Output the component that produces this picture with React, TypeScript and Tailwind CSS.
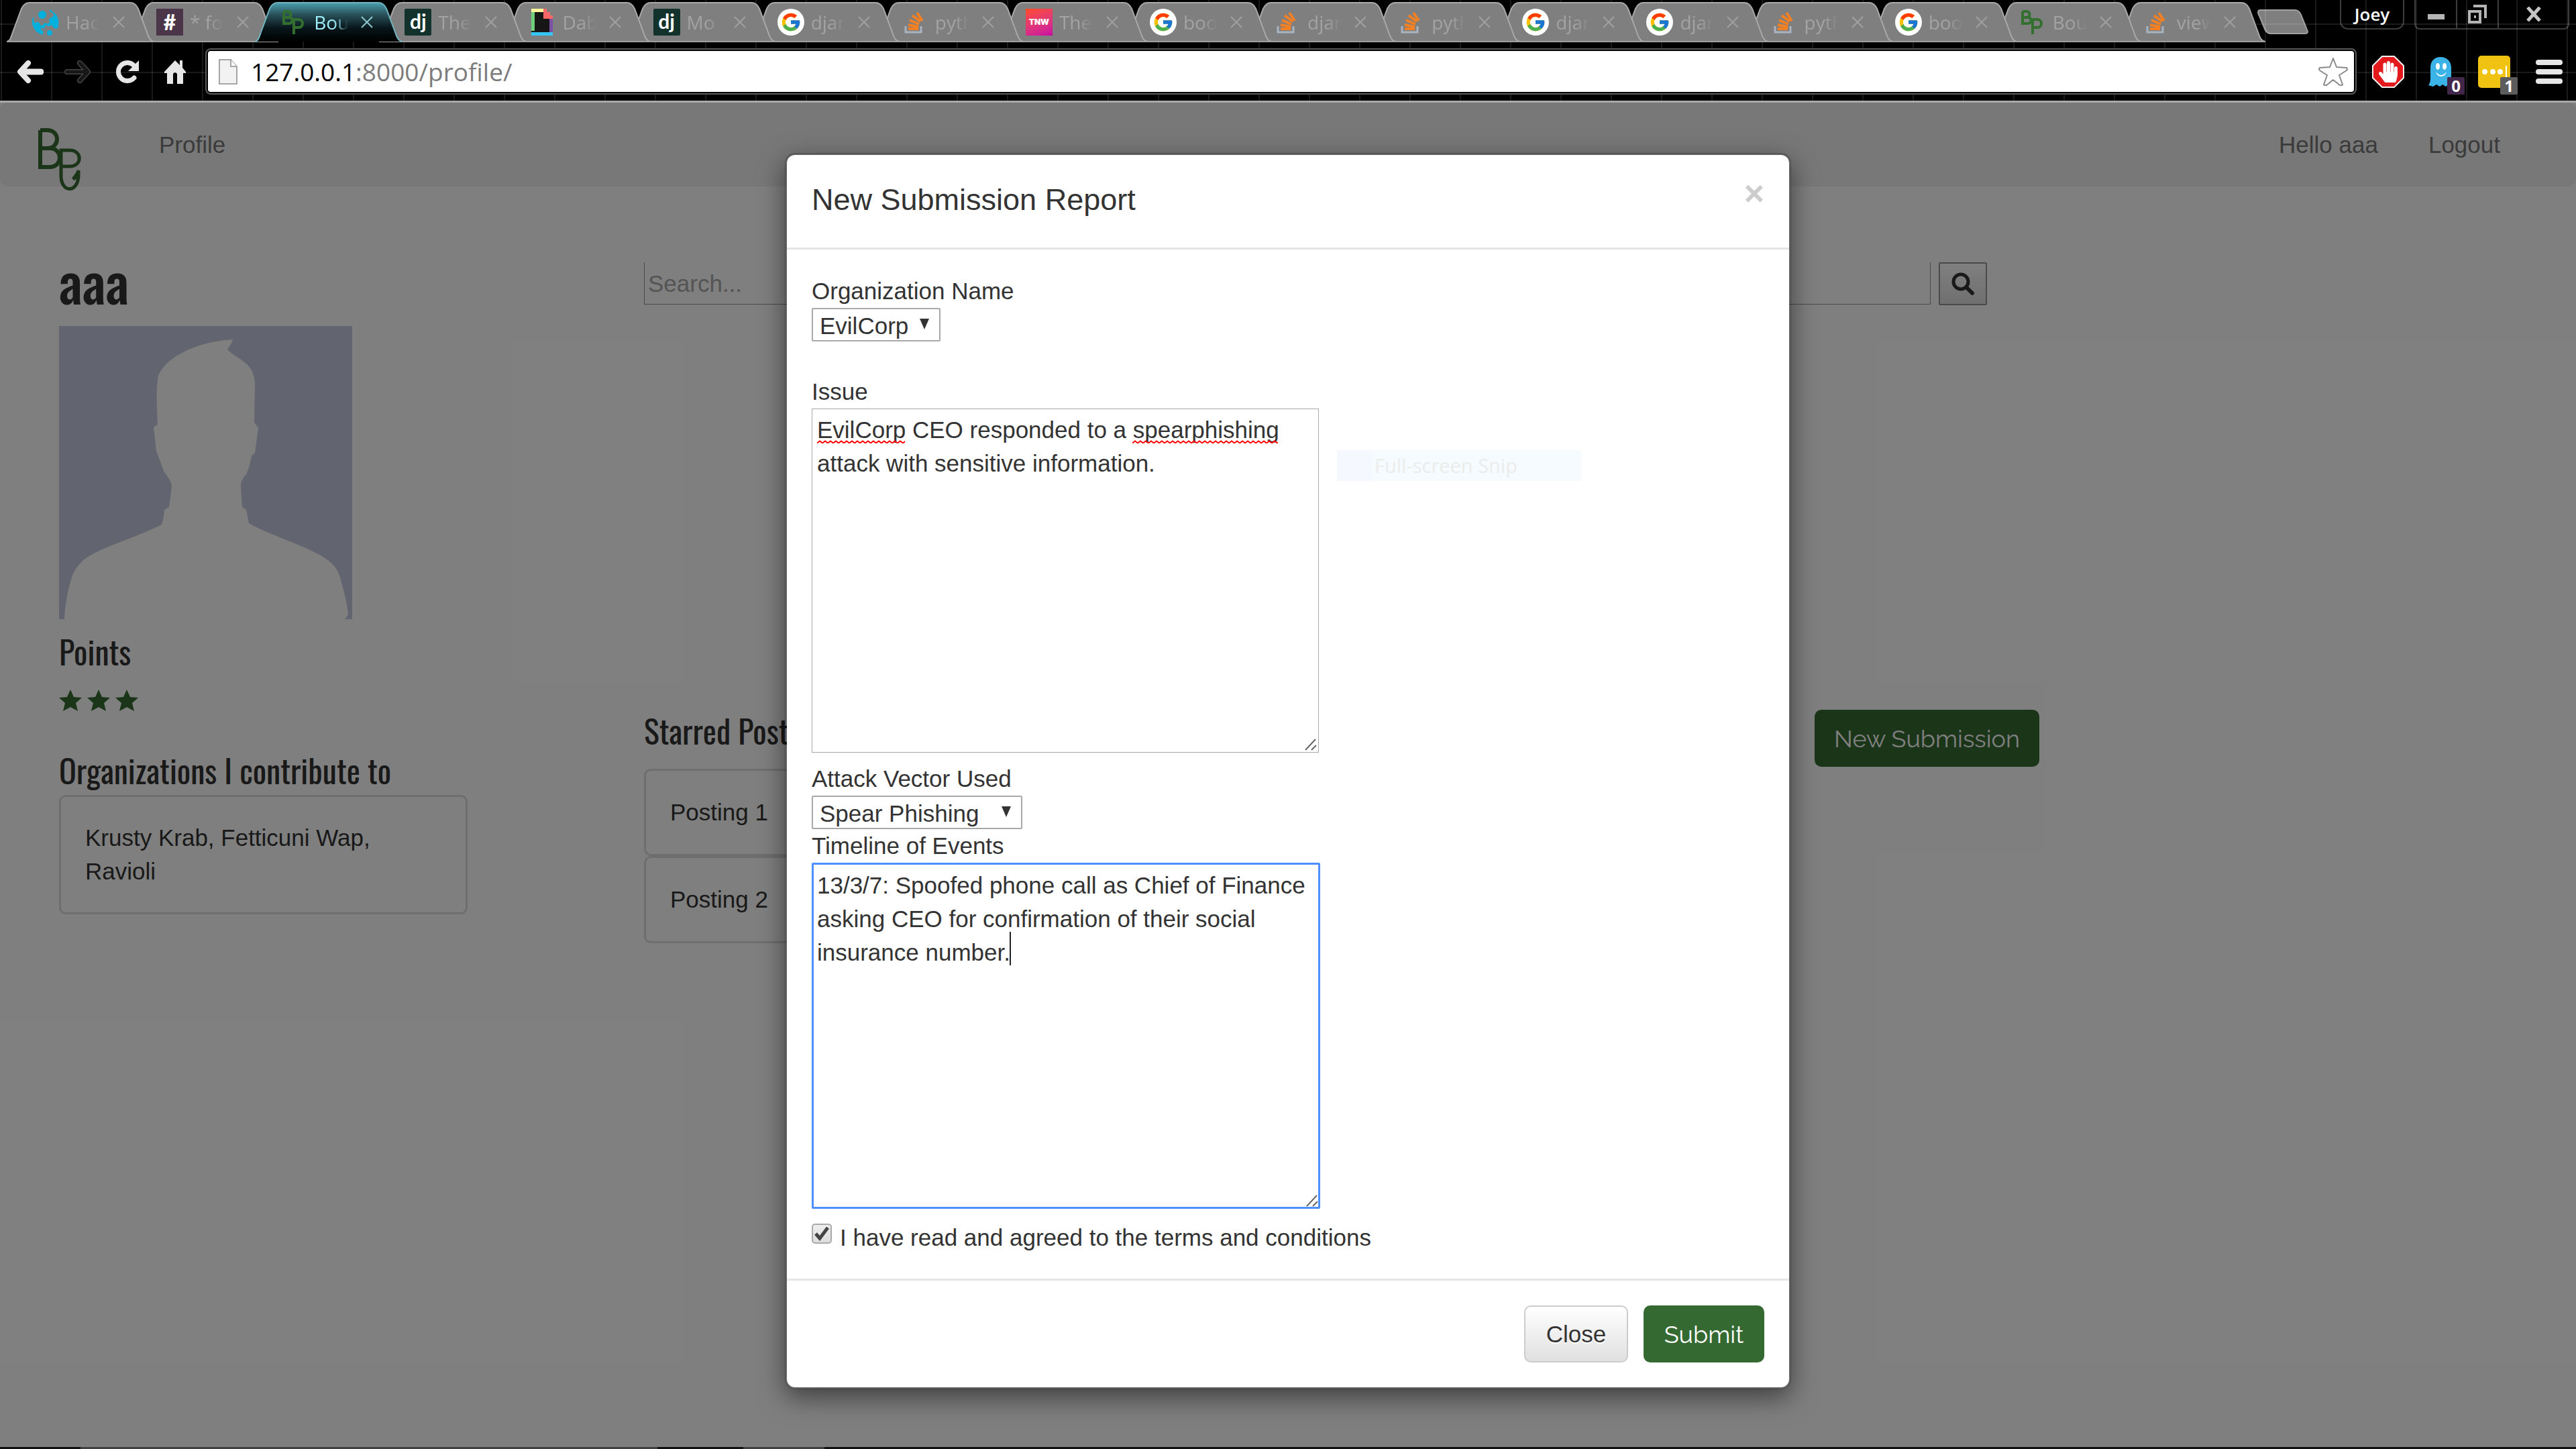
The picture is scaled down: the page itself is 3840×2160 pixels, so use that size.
import type { ReactNode } from "react";
import { FaHandPaper } from "react-icons/fa";
import { FcGoogle } from "react-icons/fc";

function GlobeIcon() {
  return (
    <svg viewBox="0 0 40 40" className="size-10" fill="#00b0dc">
      <circle cx="15" cy="9" r="6" />
      <path d="M27 1c3 4 8 5 10 10 3 6 3 12 1 18-4 2-8-1-8-5-3 1-4 3-7 2-1-2-4-2-4 1 0 3-4 3-6 1 1 3-1 4 3 5 2 2-1 4 0 6C7 37 1 30 0 21c0-4 0-7 2-9 1 4-1 8 3 9 4-3 7 0 7 4 3 0 5 0 5-3 3-2 6 2 9-1 0-3-2-3 0-6 2-3 6-2 6-6 0-3-4-3-6-6z" />
      <circle cx="26" cy="36" r="4" />
    </svg>
  );
}

function SlackIcon() {
  return (
    <span className="flex size-10 items-center justify-center bg-[#4b3549] font-['Lato'] text-[32px] leading-none font-black text-white">
      #
    </span>
  );
}

function DjangoIcon() {
  return (
    <span className="flex size-10 items-center justify-center rounded-xs bg-[#13322b] pb-1 font-['Lato'] text-[30px] leading-none font-bold text-white">
      dj
    </span>
  );
}

function SketchIcon() {
  return (
    <svg viewBox="0 0 40 40" className="size-10">
      <path d="M4 0h18v10h14v30H4z" fill="#161616" />
      <path d="M4 0h18v5H9v28H4z" fill="#6fcf7a" />
      <path d="M4 0h18v5H4z" fill="#fff59a" />
      <path d="M22 0h5v5h5v5h4v5H22z" fill="#fb6767" />
      <path d="M31 15h5v20h-5z" fill="#7c52a5" />
      <path d="M4 35h32v5H4z" fill="#35c6f4" />
    </svg>
  );
}

function OverflowIcon() {
  return (
    <svg viewBox="0 0 40 40" className="size-10" fill="none">
      <path d="M6 26v9h23v-9" stroke="#a9b4c2" strokeWidth="3" />
      <path d="M10 30h15M10 24l15 3M12 17l14 6M16 10l12 9M23 6l8 12" stroke="#f48024" strokeWidth="4" />
    </svg>
  );
}

function TnwIcon() {
  return (
    <span className="flex size-10 items-center justify-center bg-linear-160 from-[#ff4a1c] to-[#c900a4] font-['Inter'] text-[12px] font-black text-white">
      TNW
    </span>
  );
}

function GoogleIcon() {
  return (
    <span className="flex size-10 items-center justify-center rounded-full bg-white">
      <FcGoogle className="size-8" />
    </span>
  );
}

function BpIcon() {
  return (
    <svg viewBox="0 0 40 40" className="size-10" fill="none" stroke="#33702f" strokeWidth="4">
      <path d="M5 4v18h8c6 0 6-9 0-9H5M5 13h6c6 0 6-9 0-9H5" />
      <path d="M20 38V16h7c8 0 8 12 0 12h-7" />
    </svg>
  );
}

const tabs: { title: string; icon: ReactNode; active?: boolean }[] = [
  { title: "Hac", icon: <GlobeIcon /> },
  { title: "* fo", icon: <SlackIcon /> },
  { title: "Bou", icon: <BpIcon />, active: true },
  { title: "The", icon: <DjangoIcon /> },
  { title: "Dab", icon: <SketchIcon /> },
  { title: "Mo", icon: <DjangoIcon /> },
  { title: "djan", icon: <GoogleIcon /> },
  { title: "pyth", icon: <OverflowIcon /> },
  { title: "The", icon: <TnwIcon /> },
  { title: "boo", icon: <GoogleIcon /> },
  { title: "djan", icon: <OverflowIcon /> },
  { title: "pyth", icon: <OverflowIcon /> },
  { title: "djan", icon: <GoogleIcon /> },
  { title: "djan", icon: <GoogleIcon /> },
  { title: "pyth", icon: <OverflowIcon /> },
  { title: "boo", icon: <GoogleIcon /> },
  { title: "Bou", icon: <BpIcon /> },
  { title: "view", icon: <OverflowIcon /> },
];

function TabShape({ active }: { active?: boolean }) {
  return (
    <svg viewBox="0 0 220 63" className="absolute top-0 left-0 h-[63px] w-[220px]" fill="none">
      <defs>
        <linearGradient id="activeTab" x1="0" y1="0" x2="0" y2="1">
          <stop offset="0" stopColor="#4aa0b0" />
          <stop offset="0.3" stopColor="#2a525b" />
          <stop offset="0.65" stopColor="#08161a" />
          <stop offset="1" stopColor="#000" />
        </linearGradient>
      </defs>
      <path
        d="M0 62C5 61 6 57 9 48L22 13Q26 4 34 4H184Q192 4 196 13L209 48C212 57 214 61 220 62"
        fill={active ? "url(#activeTab)" : "#7f7f7f"}
        stroke={active ? "#6fb4bf" : "#a9a9a9"}
        strokeWidth="2"
      />
      {!active && <path d="M0 62H220" stroke="#a0a0a0" strokeWidth="2" />}
    </svg>
  );
}

function TabStrip() {
  return (
    <div className="flex h-[63px]">
      <div className="flex flex-1 pl-[10px]">
        {tabs.map((tab, i) => (
          <div
            key={i}
            className="relative h-full flex-1"
            style={{ zIndex: tab.active ? 20 : tabs.length - i }}
          >
            <TabShape active={tab.active} />
            <div className="relative flex h-full w-[180px] items-center pt-[3px] pl-[38px]">
              <span className="shrink-0">{tab.icon}</span>
              <span
                className={
                  tab.active
                    ? "ml-[10px] w-[60px] shrink-0 mask-r-from-50% mask-r-to-85% text-[28px] whitespace-nowrap text-[#9eeefa]"
                    : "ml-[10px] w-[60px] shrink-0 mask-r-from-50% mask-r-to-85% text-[28px] whitespace-nowrap text-[#a3a3a3]"
                }
              >
                {tab.title}
              </span>
              <button aria-label="Close tab" className="ml-[10px] shrink-0">
                <svg
                  viewBox="0 0 18 18"
                  className={tab.active ? "size-[18px] text-[#8fc7d0]" : "size-[18px] text-[#a0a0a0]"}
                  stroke="currentColor"
                  strokeWidth="2"
                >
                  <path d="M1 1l16 16M17 1L1 17" />
                </svg>
              </button>
            </div>
          </div>
        ))}
      </div>
      <div className="flex w-[498px] items-start pl-[23px]">
        <button aria-label="New tab" className="mt-[14px]">
          <svg viewBox="0 0 76 37" className="h-[37px] w-[76px]">
            <path d="M4 1H56Q62 1 65 8L75 33Q75 36 71 36H20Q14 36 11 29L1 5Q1 1 4 1z" fill="#7f7f7f" stroke="#a0a0a0" strokeWidth="2" />
          </svg>
        </button>
        <button className="ml-[47px] h-11 w-24 rounded-b-xl border-2 border-t-0 border-[#3c3c3c] text-[26px] leading-none font-semibold text-white">
          Joey
        </button>
        <div className="ml-[15px] flex h-11 rounded-b-lg border-2 border-t-0 border-[#3c3c3c]">
          <button aria-label="Minimize" className="flex w-[62px] items-center justify-center border-r-2 border-[#3c3c3c]">
            <span className="mt-2 h-2 w-[25px] bg-[#b5b5b5]" />
          </button>
          <button aria-label="Restore" className="flex w-[62px] items-center justify-center border-r-2 border-[#3c3c3c]">
            <svg viewBox="0 0 28 28" className="size-7" fill="none" stroke="#b5b5b5" strokeWidth="4">
              <path d="M8 2h18v18" />
              <path d="M2 10h16v16H2z" />
              <path d="M9 18h3" />
            </svg>
          </button>
          <button aria-label="Close window" className="flex w-[103px] items-center justify-center">
            <svg viewBox="0 0 24 22" className="h-[22px] w-6" stroke="#c4c4c4" strokeWidth="5">
              <path d="M3 1l18 20M21 1L3 21" />
            </svg>
          </button>
        </div>
      </div>
    </div>
  );
}

function Toolbar() {
  return (
    <div className="flex h-[87px] items-center pr-5 pl-[25px]">
      <button aria-label="Back">
        <svg viewBox="0 0 40 36" className="h-9 w-10" fill="none" stroke="#e6e6e6" strokeWidth="8" strokeLinecap="round" strokeLinejoin="round">
          <path d="M17 5L5 18l12 13" />
          <path d="M8 18h28" strokeWidth="9" />
        </svg>
      </button>
      <button aria-label="Forward" className="ml-[31px]">
        <svg viewBox="0 0 40 36" className="h-9 w-10" fill="none" strokeLinecap="round" strokeLinejoin="round">
          <path d="M23 5l12 13-12 13M4 18h28" stroke="#454545" strokeWidth="8" />
          <path d="M23 5l12 13-12 13M4 18h28" stroke="#171717" strokeWidth="5" />
        </svg>
      </button>
      <button aria-label="Reload" className="ml-9">
        <svg viewBox="0 0 36 36" className="size-9" fill="none">
          <path d="M28 27A13.500 13.500 0 1 1 27 8" stroke="#e6e6e6" strokeWidth="7" strokeLinecap="round" />
          <path d="M35 1v16H19z" fill="#e6e6e6" />
        </svg>
      </button>
      <button aria-label="Home" className="ml-9">
        <svg viewBox="0 0 34 36" className="h-9 w-[34px]" fill="#e6e6e6">
          <path d="M17 1l7 7V1h4v11l5 6v2h-4v16H20V21q-3-4-6 0v15H5V20H1v-2z" />
        </svg>
      </button>
      <form className="ml-7 flex h-[69px] flex-1 items-center rounded-lg border-2 border-[#5a5a5a] bg-black p-[2px]">
        <div className="flex h-full flex-1 items-center rounded-sm bg-white pr-[9px] pl-4">
          <svg viewBox="0 0 28 38" className="h-[38px] w-7" fill="#f2f2f2" stroke="#8c8c8c" strokeWidth="1.500">
            <path d="M1 1h17l9 10v26H1z" />
            <path d="M18 1v10h9" fill="#fff" />
          </svg>
          <div className="ml-5 flex-1 text-[37px] leading-none text-[#7c7c7c]">
            <span className="text-black">127.0.0.1</span>:8000/profile/
          </div>
          <button type="button" aria-label="Bookmark this page">
            <svg viewBox="0 0 44 42" className="h-[42px] w-11" fill="#fff" stroke="#8a8a8a" strokeWidth="2" strokeLinejoin="round">
              <path d="M22 1l5 13 15 1q2 2 0 4L31 26l5 14q-1 2-4 1L22 33l-10 8q-3 1-4-1l5-14L2 19q-2-2 0-4l15-1z" />
            </svg>
          </button>
        </div>
      </form>
      <div className="ml-[23px] flex items-center">
        <button aria-label="Ad blocker" className="relative flex size-12 items-center justify-center">
          <svg viewBox="0 0 48 48" className="absolute inset-0 size-12">
            <path d="M15 1h18l14 14v18L33 47H15L1 33V15z" fill="#e3191c" stroke="#f3f3f3" strokeWidth="2" />
          </svg>
          <FaHandPaper className="relative size-8 text-white" />
        </button>
        <button aria-label="Tracker blocker, 0 found" className="relative ml-9 h-12 w-[56px]">
          <svg viewBox="0 0 36 46" className="h-[46px] w-9">
            <path d="M3 17C3 7 9 1 18 1s16 6 16 16v22l2 5-6-2-4 3-5-3-4 3-5-3-5 3-7-2q3-4 3-10z" fill="#3cb3e6" />
            <ellipse cx="14" cy="15" rx="3" ry="5" fill="#fff" />
            <ellipse cx="24" cy="15" rx="3" ry="5" fill="#fff" />
            <path d="M11 23q8 10 16 0-2 7-8 7t-8-7z" fill="#fff" />
          </svg>
          <span className="absolute top-8 left-7 flex h-[26px] w-[26px] items-center justify-center rounded-xs bg-[#43274a] text-[24px] leading-none font-bold text-white">
            0
          </span>
        </button>
        <button aria-label="Password manager, 1 match" className="relative ml-[18px] h-12 w-[62px]">
          <svg viewBox="0 0 48 48" className="size-12">
            <rect width="48" height="48" rx="5" fill="#f0c211" />
            <g fill="#fff">
              <circle cx="10" cy="24" r="4" />
              <circle cx="22" cy="24" r="4" />
              <circle cx="33" cy="24" r="4" />
              <path d="M41 15h2v18h-2z" />
            </g>
          </svg>
          <span className="absolute top-8 left-[33px] flex h-[26px] w-[26px] items-center justify-center rounded-xs bg-[#5c5c5c] text-[24px] leading-none font-bold text-white">
            1
          </span>
        </button>
        <button aria-label="Menu" className="ml-6 flex w-10 flex-col gap-[6px]">
          <span className="h-2 rounded-full bg-[#e6e6e6]" />
          <span className="h-2 rounded-full bg-[#e6e6e6]" />
          <span className="h-2 rounded-full bg-[#e6e6e6]" />
        </button>
      </div>
    </div>
  );
}

function BrowserChrome() {
  return (
    <header className="relative border-b-[3px] border-[#a8a8a8] bg-black font-['Open_Sans',sans-serif]">
      <TabStrip />
      <div className="absolute inset-0 bg-[linear-gradient(90deg,rgba(255,255,255,0.1)_2px,transparent_2px),linear-gradient(rgba(255,255,255,0.1)_2px,transparent_2px)] bg-[length:75px_72px] bg-[position:1px_35px]" />
      <div className="relative">
        <Toolbar />
      </div>
    </header>
  );
}

function Navbar() {
  return (
    <nav className="flex h-[125px] items-center rounded-[10px] bg-[#f0f0f0] pr-[113px] pl-[57px] text-[#777]">
      <a href="/" aria-label="Home" className="mt-[45px]">
        <svg viewBox="0 0 66 94" className="h-[94px] w-[66px]" fill="none" stroke="#346a31" strokeWidth="6">
          <path d="M3 3v55h14c20 0 20-28 0-28H3M3 30h10c20 0 20-27 0-27H3" />
          <path d="M34 58V33h13c19 0 19 24 0 24H34v14c0 26 25 26 26 0V63c-1 5-4 8-8 13l8-5" strokeWidth="5" />
        </svg>
      </a>
      <a href="/profile/" className="ml-[114px]">
        Profile
      </a>
      <a href="/profile/" className="ml-auto">
        Hello aaa
      </a>
      <a href="/logout/" className="ml-[75px]">
        Logout
      </a>
    </nav>
  );
}

function Star() {
  return (
    <svg viewBox="0 0 34 32" className="h-8 w-[34px]" fill="#346a31">
      <path d="M17 0l5 11 12 1-9 8 3 12-11-6-11 6 3-12-9-8 12-1z" />
    </svg>
  );
}

function Sidebar() {
  return (
    <aside className="w-[609px]">
      <h1 className="font-['Oswald','Roboto',sans-serif] text-[80px] leading-[54px] font-medium">aaa</h1>
      <svg viewBox="0 0 437 437" className="mt-[41px] size-[437px]" role="img" aria-label="Profile picture">
        <rect width="437" height="437" fill="#c5cbdf" />
        <path
          d="M8 437C9 414 14 388 21 369Q30 350 50 340C80 324 120 313 153 296Q156 288 157 274L164 270L168 240Q168 231 157 218Q150 200 145 186L141 151L147 147C146 120 144 96 148 74C154 60 168 48 180 42C200 30 228 22 259 20Q258 25 251 35C258 43 270 48 279 56C288 64 291 74 292 84L291 144L297 152L292 189L287 193Q285 208 279 221Q270 230 271 240L273 270L279 274L283 294C310 310 355 323 386 340Q410 352 417 369Q427 400 431 428Q430 434 426 437z"
          fill="#fff"
        />
      </svg>
      <Heading className="mt-[10px]">Points</Heading>
      <div className="mt-5 flex gap-2">
        <Star />
        <Star />
        <Star />
      </div>
      <Heading className="mt-[50px]">Organizations I contribute to</Heading>
      <div className="rounded-[10px] border-3 border-[#ddd] px-9 py-9">
        <p className="w-[480px]">Krusty Krab, Fetticuni Wap, Ravioli</p>
      </div>
    </aside>
  );
}

function Heading({ className = "", children }: { className?: string; children: ReactNode }) {
  return (
    <h2 className={`font-['Oswald','Roboto',sans-serif] text-[48px] leading-[75px] font-normal ${className}`}>
      {children}
    </h2>
  );
}

function Main() {
  return (
    <main className="flex-1">
      <form className="flex items-start gap-3">
        <input
          type="search"
          aria-label="Search"
          placeholder="Search..."
          className="h-[63px] w-[1918px] border border-t-0 border-[#949494] pt-[2px] pl-[5px] placeholder:text-[#a9a9a9]"
        />
        <button
          type="button"
          aria-label="Search"
          className="flex h-16 w-[72px] items-center justify-center rounded-xs border-2 border-[#949494] bg-linear-to-b from-white to-[#e0e0e0]"
        >
          <svg viewBox="0 0 34 34" className="size-[34px]" fill="none" stroke="#333">
            <circle cx="14" cy="14" r="11" strokeWidth="5" />
            <path d="M22 22l9 9" strokeWidth="6" strokeLinecap="round" />
          </svg>
        </button>
      </form>
      <div className="mt-[596px] flex items-start">
        <section className="w-[1745px]">
          <Heading>Starred Postings</Heading>
          <div className="mt-5 mr-[45px]">
            <div className="rounded-[10px] border-3 border-[#ddd] px-9 py-[37px]">Posting 1</div>
            <div className="rounded-[10px] border-3 border-[#ddd] px-9 py-[37px]">Posting 2</div>
          </div>
        </section>
        <button className="mt-[7px] h-[85px] w-[335px] rounded-[10px] bg-[#346a31] font-['Raleway','Lato',sans-serif] text-[36px] text-white">
          New Submission
        </button>
      </div>
    </main>
  );
}

function Picker({ id, options, width }: { id: string; options: string[]; width: string }) {
  return (
    <div className={`relative h-[50px] ${width}`}>
      <select id={id} className="h-full w-full appearance-none rounded-xs border-2 border-[#a9a9a9] bg-white pb-[2px] pl-[10px]">
        {options.map((option) => (
          <option key={option}>{option}</option>
        ))}
      </select>
      <svg viewBox="0 0 14 16" className="pointer-events-none absolute top-4 right-[17px] h-4 w-[14px]" fill="#333">
        <path d="M0 0h14L7 16z" />
      </svg>
    </div>
  );
}

function Grip() {
  return (
    <svg viewBox="0 0 18 18" className="pointer-events-none absolute right-[3px] bottom-[3px] size-[18px]" stroke="#666" strokeWidth="2">
      <path d="M1 17L16 1M10 17l7-7" />
    </svg>
  );
}

// spell checker underline
function Squiggle({ className }: { className: string }) {
  return (
    <svg className={className}>
      <defs>
        <pattern id="wave" width="8" height="6" patternUnits="userSpaceOnUse">
          <path d="M0 4.500L4 1.500L8 4.500" fill="none" stroke="#f00" strokeWidth="2" />
        </pattern>
      </defs>
      <rect width="100%" height="100%" fill="url(#wave)" />
    </svg>
  );
}

function SubmissionModal() {
  return (
    <div
      role="dialog"
      aria-labelledby="modal-title"
      className="relative mt-[75px] w-[1500px] self-start rounded-[15px] border-3 border-black/20 bg-white bg-clip-padding shadow-[0_12px_38px_rgba(0,0,0,0.5)]"
    >
      <div className="flex items-start justify-between border-b-3 border-[#e5e5e5] px-[37px] pt-[35px] pb-[39px]">
        <h4 id="modal-title" className="text-[45px] leading-[64px]">
          New Submission Report
        </h4>
        <button aria-label="Close dialog" className="text-[52px] leading-[44px] font-bold text-[#ccc]">
          ×
        </button>
      </div>

      <form className="flex flex-col items-start px-[37px] pt-[37px] pb-9">
        <label htmlFor="organization">Organization Name</label>
        <Picker id="organization" options={["EvilCorp"]} width="w-[192px]" />

        <label htmlFor="issue" className="mt-[50px]">
          Issue
        </label>
        <div className="relative">
          <textarea
            id="issue"
            spellCheck={false}
            defaultValue="EvilCorp CEO responded to a spearphishing attack with sensitive information."
            className="block h-[513px] w-[756px] resize-none border border-[#a9a9a9] px-[7px] py-[6px]"
          />
          <Squiggle className="absolute top-[47px] left-2 h-[6px] w-[131px]" />
          <Squiggle className="absolute top-[47px] left-[478px] h-[6px] w-[217px]" />
          <Grip />
        </div>

        <label htmlFor="vector" className="mt-[14px]">
          Attack Vector Used
        </label>
        <Picker id="vector" options={["Spear Phishing"]} width="w-[314px]" />

        <label htmlFor="timeline">Timeline of Events</label>
        <div className="relative">
          <textarea
            id="timeline"
            spellCheck={false}
            defaultValue="13/3/7: Spoofed phone call as Chief of Finance asking CEO for confirmation of their social insurance number."
            className="block h-[516px] w-[758px] resize-none rounded-xs border-3 border-[#4d90fe] px-[5px] py-[6px]"
          />
          <div className="absolute top-[103px] left-[295px] h-[50px] w-[2px] bg-[#222]" />
          <Grip />
        </div>

        <label className="mt-[18px] flex items-center">
          <input
            type="checkbox"
            defaultChecked
            className="peer mb-3 size-[30px] appearance-none rounded-[5px] border-2 border-[#aaa] bg-linear-to-b from-[#eee] to-[#ddd]"
          />
          <svg
            viewBox="0 0 30 30"
            className="pointer-events-none absolute mb-3 hidden size-[30px] peer-checked:block"
            fill="none"
            stroke="#444"
            strokeWidth="5"
          >
            <path d="M6 15l6 7L24 6" />
          </svg>
          <span className="ml-3">I have read and agreed to the terms and conditions</span>
        </label>
      </form>

      <div className="flex justify-end gap-[23px] border-t-3 border-[#e5e5e5] p-[37px]">
        <button className="h-[85px] w-[155px] rounded-[10px] border-2 border-[#ccc] bg-linear-to-b from-white to-[#e0e0e0] text-shadow-[0_2px_0_#fff]">
          Close
        </button>
        <button className="h-[85px] w-[180px] rounded-[10px] bg-[#346a31] font-['Raleway','Lato',sans-serif] text-[36px] text-white">
          Submit
        </button>
      </div>

      {/* leftover entry of the snipping tool menu */}
      <div className="absolute top-[440px] left-[820px] flex h-[46px] w-[364px] items-center bg-[#f5fbff] font-['Open_Sans',sans-serif] text-[29px] text-[#ececea]">
        <span className="h-full w-[52px] bg-[#f5f9ff]" />
        <span className="ml-1">Full-screen Snip</span>
      </div>
    </div>
  );
}

export default function App() {
  return (
    <div className="flex min-h-screen flex-col bg-white font-['Liberation_Sans',Arial,sans-serif] text-[35px] leading-[50px] text-[#333]">
      <BrowserChrome />
      <div className="relative flex-1">
        <Navbar />
        <div className="flex gap-[263px] px-[88px] pt-[113px]">
          <Sidebar />
          <Main />
        </div>
        <div className="absolute inset-0 flex justify-center bg-black/50">
          <SubmissionModal />
        </div>
      </div>
      <footer className="flex h-[3px] bg-[#111]">
        <div className="ml-[120px] w-[860px] bg-[#404040]" />
        <div className="ml-32 w-[121px] bg-[#404040]" />
      </footer>
    </div>
  );
}
